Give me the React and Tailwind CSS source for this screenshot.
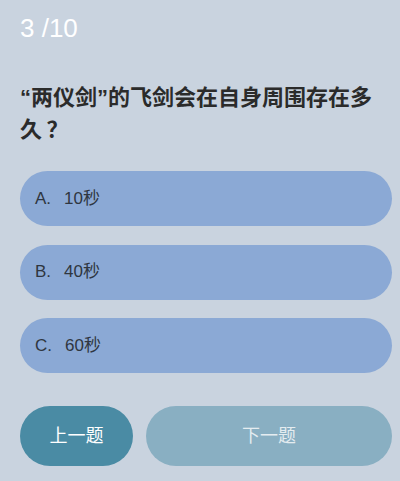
export default function App() {
  const options = [
    { key: "A", text: "10秒" },
    { key: "B", text: "40秒" },
    { key: "C", text: "60秒" },
  ];

  return (
    <div
      className="w-[400px] h-[481px] bg-[#c9d3df] pl-5 pr-2 overflow-hidden"
      style={{ fontFamily: '"Liberation Sans", "Noto Sans CJK SC", sans-serif' }}
    >
      <div className="pt-[13px] text-[26px] leading-[30px] text-white">3 /10</div>

      <div className="mt-[39px] pr-3 text-[22px] leading-[32px] font-bold text-[#2b2b2b]">
        {"“两仪剑”的飞剑会在自身周围存在多久\u2009？"}
      </div>

      <div className="mt-[25px] flex flex-col gap-[18.5px]">
        {options.map((o) => (
          <div
            key={o.key}
            className="h-[55px] rounded-full bg-[#8ba9d5] flex items-center pl-[15px] text-[17px] text-[#2f3640]"
          >
            <span>{o.key}.</span>
            <span className="ml-[13px]">{o.text}</span>
          </div>
        ))}
      </div>

      <div className="mt-[33px] flex gap-[13px]">
        <button className="w-[113px] h-[60px] rounded-full bg-[#4a8ba4] text-white text-[18px]">
          上一题
        </button>
        <button className="flex-1 h-[60px] rounded-full bg-[#89afc2] text-[#e4ecf0] text-[18px]">
          下一题
        </button>
      </div>
    </div>
  );
}
